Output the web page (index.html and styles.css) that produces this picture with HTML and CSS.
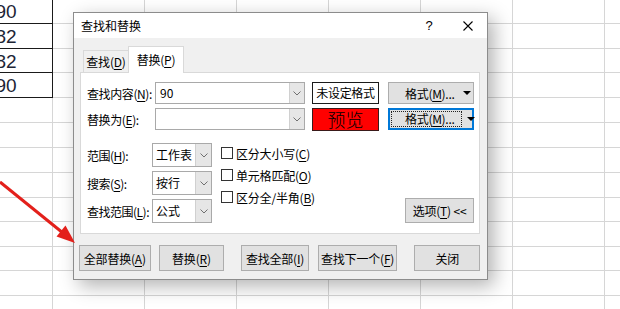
FILE: index.html
```html
<!DOCTYPE html>
<html lang="zh-CN">
<head>
    <meta charset="UTF-8">
    <title>查找和替换</title>
    <link rel="stylesheet" href="styles.css">
</head>
<body>
    <div class="sheet">
        <div class="row"><div class="data">90</div></div>
        <div class="row"><div class="data">82</div></div>
        <div class="row short"><div class="data">82</div></div>
        <div class="row"><div class="data">90</div></div>
        <div class="row"></div>
        <div class="row"></div>
        <div class="row"></div>
        <div class="row"></div>
        <div class="row short"></div>
        <div class="row"></div>
        <div class="row short"></div>
        <div class="row"></div>
        <div class="row"></div>
    </div>

    <div class="dialog">
        <div class="titlebar">
            <span class="title">查找和替换</span>
            <span class="help">?</span>
            <span class="close">
                <svg width="10" height="10" viewBox="0 0 10 10"><path d="M0.5 0.5L9.5 9.5M9.5 0.5L0.5 9.5" stroke="#000" stroke-width="1.1" fill="none"/></svg>
            </span>
        </div>
        <div class="dialog-body">
            <div class="tabs">
                <div class="tab">查找(<u>D</u>)</div>
                <div class="tab active">替换(<u>P</u>)</div>
            </div>
            <div class="panel">
                <div class="field-row">
                    <label class="field-label">查找内容(<u>N</u>):</label>
                    <div class="combo">
                        <span class="combo-text">90</span>
                        <span class="drop"><svg width="8" height="5" viewBox="0 0 8 5"><path d="M0.5 0.5L4 4L7.5 0.5" stroke="#707070" fill="none"/></svg></span>
                    </div>
                    <div class="fmt-box">未设定格式</div>
                    <div class="split-btn">
                        <span class="split-main">格式(<u>M</u>)...</span>
                        <span class="caret"></span>
                    </div>
                </div>
                <div class="field-row">
                    <label class="field-label">替换为(<u>E</u>):</label>
                    <div class="combo">
                        <span class="combo-text"></span>
                        <span class="drop"><svg width="8" height="5" viewBox="0 0 8 5"><path d="M0.5 0.5L4 4L7.5 0.5" stroke="#707070" fill="none"/></svg></span>
                    </div>
                    <div class="fmt-box preview">预览</div>
                    <div class="split-btn focused">
                        <span class="split-main">格式(<u>M</u>)...</span>
                        <span class="caret"></span>
                    </div>
                </div>

                <div class="options">
                    <div class="scope">
                        <label class="field-label">范围(<u>H</u>):</label>
                        <div class="select"><span>工作表</span><span class="drop"><svg width="8" height="5" viewBox="0 0 8 5"><path d="M0.5 0.5L4 4L7.5 0.5" stroke="#707070" fill="none"/></svg></span></div>
                        <label class="field-label">搜索(<u>S</u>):</label>
                        <div class="select"><span>按行</span><span class="drop"><svg width="8" height="5" viewBox="0 0 8 5"><path d="M0.5 0.5L4 4L7.5 0.5" stroke="#707070" fill="none"/></svg></span></div>
                        <label class="field-label">查找范围(<u>L</u>):</label>
                        <div class="select"><span>公式</span><span class="drop"><svg width="8" height="5" viewBox="0 0 8 5"><path d="M0.5 0.5L4 4L7.5 0.5" stroke="#707070" fill="none"/></svg></span></div>
                    </div>
                    <div class="checks">
                        <div class="check"><span class="box"></span>区分大小写(<u>C</u>)</div>
                        <div class="check"><span class="box"></span>单元格匹配(<u>O</u>)</div>
                        <div class="check"><span class="box"></span>区分全/半角(<u>B</u>)</div>
                    </div>
                    <button class="btn options-btn">选项(<u>T</u>) &lt;&lt;</button>
                </div>
            </div>

            <div class="actions">
                <button class="btn w-replace-all">全部替换(<u>A</u>)</button>
                <button class="btn w-replace">替换(<u>R</u>)</button>
                <button class="btn w-find-all">查找全部(<u>I</u>)</button>
                <button class="btn w-find-next">查找下一个(<u>F</u>)</button>
                <button class="btn w-close">关闭</button>
            </div>
        </div>
    </div>

    <svg class="pointer" width="620" height="309" viewBox="0 0 620 309">
        <line x1="0" y1="182" x2="63" y2="233" stroke="#e3201b" stroke-width="3"/>
        <polygon points="75,243 56.5,236.5 65.5,225.5" fill="#e3201b"/>
    </svg>
</body>
</html>
```

FILE: styles.css
```css
body {
    margin: 0;
    width: 620px;
    height: 309px;
    overflow: hidden;
    position: relative;
    background: #fff;
    font-family: "Noto Sans CJK SC", sans-serif;
    font-size: 12px;
    color: #000;
    white-space: nowrap;
}
u {
    text-decoration-thickness: 1px;
    text-underline-offset: 2px;
}

/* spreadsheet behind the dialog */
.sheet {
    margin: -1px 0 0 -40px;
    width: 660px;
    background-image: repeating-linear-gradient(to right, transparent 0 91px, #d6d6d6 91px 92px);
    background-position: 1px 0;
}
.row {
    display: flex;
    height: 25px;
    box-sizing: border-box;
    border-bottom: 1px solid #d6d6d6;
}
.row.short {
    height: 24px;
}
.data {
    flex: none;
    width: 93px;
    height: 25px;
    box-sizing: border-box;
    border-right: 1px solid #1a1a1a;
    border-bottom: 1px solid #1a1a1a;
    background: #fff;
    font-family: "Liberation Sans", sans-serif;
    font-size: 19px;
    line-height: 26px;
    text-align: center;
    color: #1d2535;
}
.row.short .data {
    height: 24px;
}

/* dialog */
.dialog {
    position: absolute;
    left: 73px;
    top: 12px;
    width: 415px;
    box-sizing: border-box;
    border: 1px solid #8c8c8c;
    background: #f0f0f0;
    box-shadow: 6px 6px 18px rgba(0, 0, 0, 0.3);
}
.titlebar {
    display: flex;
    align-items: center;
    height: 25px;
    background: #fff;
}
.title {
    flex: 1;
    padding-left: 7px;
}
.help {
    width: 40px;
    text-align: center;
    font-family: "Liberation Sans", sans-serif;
    font-size: 13px;
}
.close {
    width: 38px;
    display: flex;
    justify-content: center;
}
.dialog-body {
    padding: 8px 7px 8px 6px;
}
.tabs {
    display: flex;
    align-items: flex-end;
    padding-left: 3px;
    margin-bottom: -1px;
    position: relative;
    z-index: 1;
}
.tab {
    width: 46px;
    height: 22px;
    margin-bottom: 1px;
    box-sizing: border-box;
    border: 1px solid #d9d9d9;
    border-bottom: none;
    text-align: center;
    line-height: 21px;
    letter-spacing: -0.2px;
}
.tab.active {
    width: 56px;
    height: 27px;
    margin: 0 0 0 -1px;
    background: #fff;
    line-height: 26px;
}
.panel {
    background: #fff;
    border: 1px solid #d9d9d9;
    padding: 9px 5px 10px 6px;
}
.field-row {
    display: flex;
    align-items: center;
    height: 22px;
}
.field-row + .field-row {
    margin-top: 4px;
}
.field-label {
    width: 68px;
    flex: none;
    letter-spacing: -0.4px;
}
.combo {
    display: flex;
    width: 150px;
    height: 22px;
    margin-right: 7px;
    box-sizing: border-box;
    border: 1px solid #a9a9a9;
}
.combo-text {
    flex: 1;
    padding-left: 4px;
    line-height: 20px;
}
.drop {
    width: 14px;
    display: flex;
    align-items: center;
    justify-content: center;
    background: #e6e6e6;
    border-left: 1px solid #d0d0d0;
}
.fmt-box {
    width: 67px;
    height: 22px;
    margin-right: 9px;
    box-sizing: border-box;
    border: 1px solid #1a1a1a;
    text-align: center;
    line-height: 20px;
    letter-spacing: -0.3px;
}
.fmt-box.preview {
    height: 23px;
    background: #ff0000;
    border-color: #3a1a1a;
    font-size: 18px;
    font-weight: 300;
    line-height: 21px;
    letter-spacing: 0;
}
.split-btn {
    display: flex;
    align-items: center;
    width: 86px;
    height: 22px;
    box-sizing: border-box;
    border: 1px solid #adadad;
    background: #e1e1e1;
}
.split-main {
    flex: 1;
    padding-left: 16px;
    letter-spacing: -0.3px;
}
.caret {
    width: 0;
    height: 0;
    margin-right: 2px;
    border-left: 4px solid transparent;
    border-right: 4px solid transparent;
    border-top: 4px solid #000;
}
.split-btn.focused {
    border-color: #0078d7;
    box-shadow: inset 0 0 0 1px #0078d7;
}
.split-btn.focused .split-main {
    flex: none;
    width: 71px;
    height: 16px;
    margin: 0 2px 0 2px;
    padding-left: 13px;
    box-sizing: border-box;
    border: 1px dotted #222;
    line-height: 14px;
}
.split-btn.focused .caret {
    margin-left: 3px;
}

.options {
    display: flex;
    margin-top: 13px;
}
.scope {
    display: grid;
    grid-template-columns: 65px 60px;
    row-gap: 4px;
    align-items: center;
}
.scope .field-label {
    width: auto;
    letter-spacing: -0.5px;
}
.select {
    display: flex;
    width: 60px;
    height: 24px;
    box-sizing: border-box;
    border: 1px solid #a9a9a9;
}
.select span:first-child {
    flex: 1;
    padding-left: 3px;
    line-height: 22px;
}
.select .drop {
    width: 15px;
}
.checks {
    display: flex;
    flex-direction: column;
    margin: -1px 0 0 9px;
}
.check {
    display: flex;
    align-items: center;
    height: 22px;
    letter-spacing: -0.2px;
}
.box {
    width: 12px;
    height: 12px;
    margin-right: 3px;
    box-sizing: border-box;
    border: 1px solid #333;
    background: #fff;
}
.btn {
    height: 26px;
    padding: 0;
    box-sizing: border-box;
    border: 1px solid #adadad;
    background: #e1e1e1;
    font-family: inherit;
    font-size: 12px;
    color: #000;
    letter-spacing: -0.2px;
}
.options-btn {
    width: 69px;
    height: 25px;
    margin-left: auto;
    align-self: flex-end;
}
.actions {
    display: flex;
    margin: 11px 0 0 -1px;
}
.w-replace-all { width: 72px; }
.w-replace { width: 66px; margin-left: 8px; }
.w-find-all { width: 68px; margin-left: 17px; }
.w-find-next { width: 80px; margin-left: 9px; }
.w-close { width: 66px; margin-left: 17px; }

.pointer {
    position: absolute;
    left: 0;
    top: 0;
}
```
